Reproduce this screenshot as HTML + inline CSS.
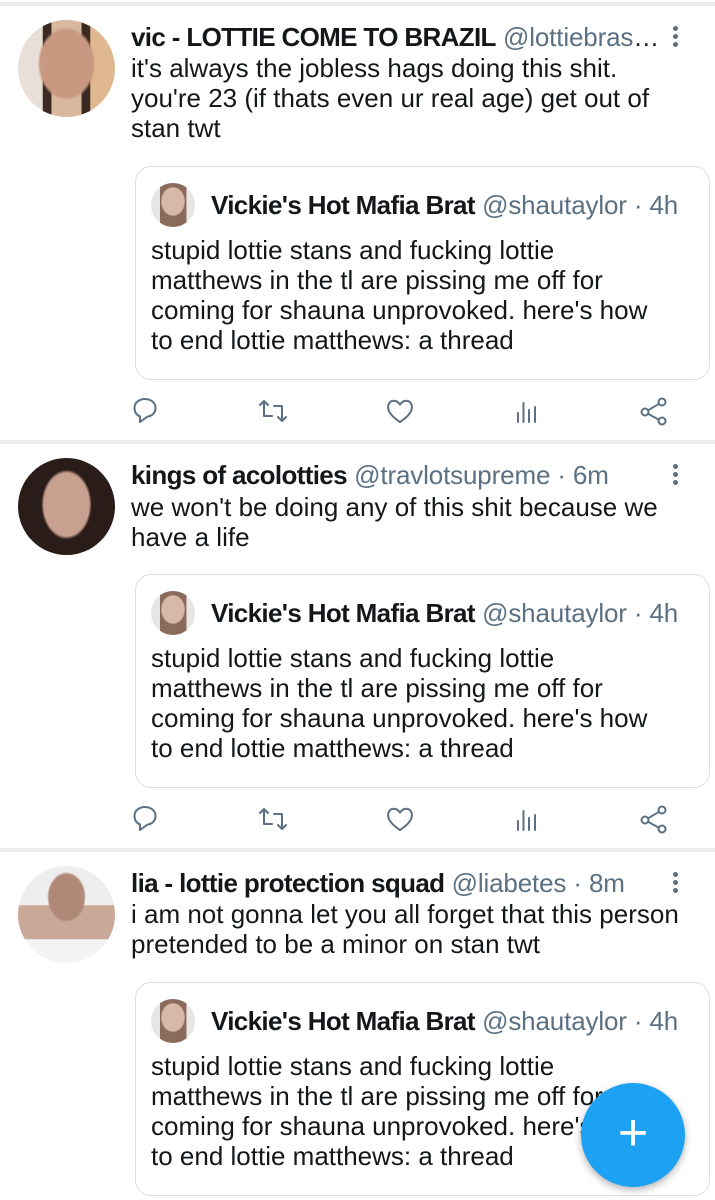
<!DOCTYPE html>
<html><head><meta charset="utf-8"><style>
*{margin:0;padding:0;box-sizing:border-box}
body{width:715px;height:1200px;overflow:hidden;background:#fff;font-family:"Liberation Sans",sans-serif;color:#14171a;position:relative}
.sep{position:absolute;left:0;width:715px;height:4px;background:#ebeef0}
.av{position:absolute;border-radius:50%;overflow:hidden}
.t{position:absolute;white-space:nowrap;font-size:26px;line-height:30px}
.h{overflow:hidden;text-overflow:ellipsis}
.b{font-weight:bold;letter-spacing:-0.65px}
.g{color:#5b7083;letter-spacing:-0.15px}
.q{position:absolute;left:135px;width:575px;height:214px;border:1.5px solid #d8dfe4;border-radius:16px}
.dots{position:absolute;left:673px;width:6px}
.dots i{display:block;width:5px;height:5px;border-radius:50%;background:#5b7083;margin-bottom:3px}
svg.ic{position:absolute;width:30px;height:30px;fill:none;stroke:#5b7083;stroke-width:2;stroke-linecap:round;stroke-linejoin:round}
.fab{position:absolute;left:581px;top:1083px;width:104px;height:104px;border-radius:50%;background:#1da1f2;box-shadow:0 3px 8px rgba(0,0,0,.3);color:#fff;font-size:52px;line-height:100px;text-align:center}
</style></head><body>
<div class="sep" style="top:2px"></div>

<!-- tweet 1 -->
<div class="av" style="left:18px;top:20px;width:97px;height:97px;background:radial-gradient(ellipse 30% 38% at 50% 45%,#c99880 0 90%,transparent 100%),linear-gradient(90deg,#e8e0d8 0 25%,#3a2a22 26% 34%,#d9b8a0 35% 65%,#3a2a22 66% 74%,#e0b890 75%)"></div>
<div class="t h" style="left:131px;top:22px;width:530px"><span class="b">vic - LOTTIE COME TO BRAZIL</span> <span class="g">@lottiebrasil...</span></div>
<div class="dots" style="top:26px"><i></i><i></i><i></i></div>
<div class="t" style="left:131px;top:53px">it's always the jobless hags doing this shit.<br>you're 23 (if thats even ur real age) get out of<br>stan twt</div>
<div class="q" style="top:166px"></div>
<div class="av" style="left:151px;top:183px;width:44px;height:44px;background:radial-gradient(ellipse 28% 34% at 50% 42%,#d8b8a8 0 90%,transparent 100%),linear-gradient(90deg,#e6e6e6 0 20%,#8a6a5a 21% 80%,#e6e6e6 81%)"></div>
<div class="t" style="left:211px;top:190px"><span class="b">Vickie's Hot Mafia Brat</span> <span class="g">@shautaylor · 4h</span></div>
<div class="t" style="left:151px;top:235px">stupid lottie stans and fucking lottie<br>matthews in the tl are pissing me off for<br>coming for shauna unprovoked. here's how<br>to end lottie matthews: a thread</div>

<!-- tweet 2 -->
<div class="sep" style="top:440px"></div>
<div class="av" style="left:18px;top:458px;width:97px;height:97px;background:radial-gradient(ellipse 26% 36% at 50% 48%,#c8a090 0 90%,transparent 100%),#2a1c18"></div>
<div class="t" style="left:131px;top:460px"><span class="b">kings of acolotties</span> <span class="g">@travlotsupreme · 6m</span></div>
<div class="dots" style="top:464px"><i></i><i></i><i></i></div>
<div class="t" style="left:131px;top:492px">we won't be doing any of this shit because we<br>have a life</div>
<div class="q" style="top:574px"></div>
<div class="av" style="left:151px;top:591px;width:44px;height:44px;background:radial-gradient(ellipse 28% 34% at 50% 42%,#d8b8a8 0 90%,transparent 100%),linear-gradient(90deg,#e6e6e6 0 20%,#8a6a5a 21% 80%,#e6e6e6 81%)"></div>
<div class="t" style="left:211px;top:598px"><span class="b">Vickie's Hot Mafia Brat</span> <span class="g">@shautaylor · 4h</span></div>
<div class="t" style="left:151px;top:643px">stupid lottie stans and fucking lottie<br>matthews in the tl are pissing me off for<br>coming for shauna unprovoked. here's how<br>to end lottie matthews: a thread</div>

<!-- tweet 3 -->
<div class="sep" style="top:848px"></div>
<div class="av" style="left:18px;top:866px;width:97px;height:97px;background:radial-gradient(ellipse 20% 26% at 50% 32%,#b08878 0 90%,transparent 100%),linear-gradient(180deg,#eeeeee 0 40%,#c9a898 41% 75%,#f4f4f4 76%)"></div>
<div class="t" style="left:131px;top:868px"><span class="b">lia - lottie protection squad</span> <span class="g">@liabetes · 8m</span></div>
<div class="dots" style="top:872px"><i></i><i></i><i></i></div>
<div class="t" style="left:131px;top:899px">i am not gonna let you all forget that this person<br>pretended to be a minor on stan twt</div>
<div class="q" style="top:982px;height:214px"></div>
<div class="av" style="left:151px;top:999px;width:44px;height:44px;background:radial-gradient(ellipse 28% 34% at 50% 42%,#d8b8a8 0 90%,transparent 100%),linear-gradient(90deg,#e6e6e6 0 20%,#8a6a5a 21% 80%,#e6e6e6 81%)"></div>
<div class="t" style="left:211px;top:1006px"><span class="b">Vickie's Hot Mafia Brat</span> <span class="g">@shautaylor · 4h</span></div>
<div class="t" style="left:151px;top:1051px">stupid lottie stans and fucking lottie<br>matthews in the tl are pissing me off for<br>coming for shauna unprovoked. here's how<br>to end lottie matthews: a thread</div>

<!-- action rows -->
<svg width="0" height="0" style="position:absolute"><defs>
<g id="a1"><path d="M13 3c6 0 10.5 3.8 10.5 9 0 4.6-3.3 8-8 8.6L8 26v-5.6C4.5 19 2.5 16 2.5 12 2.5 6.8 7 3 13 3z"/></g>
<g id="a2"><path d="M2 9l4-4 4 4M6 5v15h8M28 21l-4 4-4-4M24 25V10h-8"/></g>
<g id="a3"><path d="M15 26C3 18 2 12 3.8 8 5.8 3.8 11.5 3.5 15 8.5 18.5 3.5 24.2 3.8 26.2 8 28 12 27 18 15 26z"/></g>
<g id="a4"><path d="M6 17v9M11.5 7v19M17 14v12M23 11v15"/></g>
<g id="a5"><circle cx="6" cy="16" r="3.5"/><circle cx="23" cy="6" r="3.5"/><circle cx="23" cy="25" r="3.5"/><path d="M9 14.3l11-6.5M9 17.7l11 6"/></g>
</defs></svg>
<svg class="ic" style="left:132px;top:396px" viewBox="0 0 30 30"><use href="#a1"/></svg>
<svg class="ic" style="left:258px;top:396px" viewBox="0 0 30 30"><use href="#a2"/></svg>
<svg class="ic" style="left:385px;top:396px" viewBox="0 0 30 30"><use href="#a3"/></svg>
<svg class="ic" style="left:512px;top:396px" viewBox="0 0 30 30"><use href="#a4"/></svg>
<svg class="ic" style="left:639px;top:396px" viewBox="0 0 30 30"><use href="#a5"/></svg>
<svg class="ic" style="left:132px;top:804px" viewBox="0 0 30 30"><use href="#a1"/></svg>
<svg class="ic" style="left:258px;top:804px" viewBox="0 0 30 30"><use href="#a2"/></svg>
<svg class="ic" style="left:385px;top:804px" viewBox="0 0 30 30"><use href="#a3"/></svg>
<svg class="ic" style="left:512px;top:804px" viewBox="0 0 30 30"><use href="#a4"/></svg>
<svg class="ic" style="left:639px;top:804px" viewBox="0 0 30 30"><use href="#a5"/></svg>

<div class="fab">+</div>
</body></html>
